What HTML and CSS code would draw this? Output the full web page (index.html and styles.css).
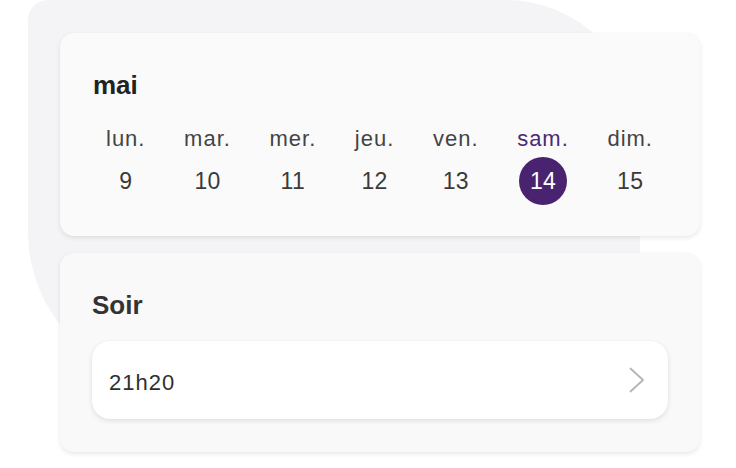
FILE: index.html
```html
<!DOCTYPE html>
<html lang="fr">
<head>
<meta charset="utf-8">
<title>Calendrier</title>
<link rel="stylesheet" href="styles.css">
</head>
<body>
<div class="page">
  <div class="blob"></div>
  <section class="card week-card">
    <h2 class="title">mai</h2>
    <div class="days">
      <div class="day"><span class="label">lun.</span><span class="num">9</span></div>
      <div class="day"><span class="label">mar.</span><span class="num">10</span></div>
      <div class="day"><span class="label">mer.</span><span class="num">11</span></div>
      <div class="day"><span class="label">jeu.</span><span class="num">12</span></div>
      <div class="day"><span class="label">ven.</span><span class="num">13</span></div>
      <div class="day selected"><span class="label">sam.</span><span class="num">14</span></div>
      <div class="day"><span class="label">dim.</span><span class="num">15</span></div>
    </div>
  </section>
  <section class="card slot-card">
    <h2 class="title soir">Soir</h2>
    <div class="slot">
      <span class="time">21h20</span>
      <svg class="chev" width="16" height="26" viewBox="0 0 16 26" aria-hidden="true">
        <polyline points="1.5,1.5 14,13 1.5,24.5" fill="none" stroke="#b3b3b3" stroke-width="1.8" stroke-linecap="round" stroke-linejoin="round"/>
      </svg>
    </div>
  </section>
</div>
</body>
</html>
```

FILE: styles.css
```css
html, body {
  margin: 0;
  padding: 0;
  background: #ffffff;
}

body {
  font-family: "Liberation Sans", Arial, Helvetica, sans-serif;
  color: #333;
}

.page {
  position: relative;
  z-index: 0;
  width: 640px;
  padding: 33px 36px 16px 60px;
}

.blob {
  position: absolute;
  z-index: -1;
  left: 28px;
  top: 0;
  width: 612px;
  height: 382px;
  background: #f4f4f6;
  border-radius: 20px 135px 0 150px;
}

.card {
  background: #fafafa;
  border-radius: 14px;
  box-shadow: 0 2px 5px rgba(0, 0, 0, 0.09), 0 0 1px rgba(0, 0, 0, 0.04);
}

.title {
  margin: 0;
  font-size: 26px;
  line-height: 30px;
  font-weight: 700;
  color: #222;
}

.week-card {
  height: 203px;
  box-sizing: border-box;
  padding: 37px 47px 0 33px;
}

.days {
  display: flex;
  justify-content: space-between;
  margin-left: 13px;
  margin-top: 26px;
}

.day {
  display: flex;
  flex-direction: column;
  align-items: center;
}

.label {
  font-size: 22px;
  line-height: 26px;
  letter-spacing: 1px;
  color: #444;
}

.num {
  width: 48px;
  height: 48px;
  margin: 5px -20px 0;
  border-radius: 50%;
  text-align: center;
  font-size: 23px;
  line-height: 48px;
  letter-spacing: 0.3px;
  color: #3a3a3a;
}

.selected .label {
  color: #4b2a73;
}

.selected .num {
  background: #4a2370;
  color: #ffffff;
}

.slot-card {
  margin-top: 17px;
  background: #f9f9f9;
  padding: 37px 32px 33px 32px;
}

.soir {
  color: #333;
}

.slot {
  margin-top: 21px;
  height: 78px;
  box-sizing: border-box;
  background: #ffffff;
  border-radius: 18px;
  box-shadow: 0 2px 5px rgba(0, 0, 0, 0.1), 0 0 1px rgba(0, 0, 0, 0.05);
  display: flex;
  align-items: center;
  justify-content: space-between;
  padding: 0 23px 0 17px;
}

.time {
  font-size: 22px;
  line-height: 26px;
  letter-spacing: 1px;
  padding-top: 6px;
  color: #2f2f2f;
}

.chev {
  display: block;
}
```
